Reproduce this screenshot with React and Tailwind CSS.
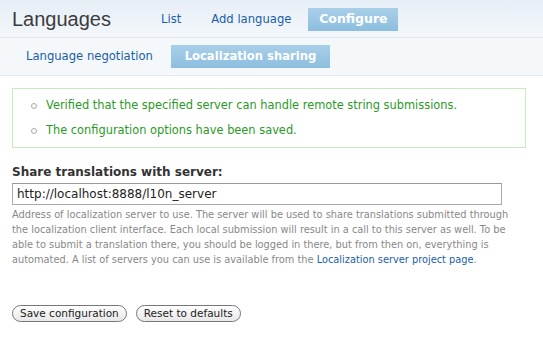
import React from 'react';

export default function App() {
  return (
    <div className="w-[543px] h-[338px] bg-white text-[#333] font-['DejaVu_Sans',sans-serif] overflow-hidden">
      {/* Title + primary tabs */}
      <div className="h-[38px] flex items-start bg-gradient-to-b from-[#e6eef6] to-[#f3f7fb] border-b border-[#e2e8ee]">
        <h1 className="ml-[12px] mt-[7px] text-[20px] leading-[24px] text-[#3c3c3c] font-['Liberation_Sans',sans-serif]">Languages</h1>
        <ul className="flex items-center ml-[50px] mt-[8px] text-[11.6px]">
          <li className="text-[#1a5ea8] leading-[23px]">List</li>
          <li className="ml-[30px] text-[#1a5ea8] leading-[23px]">Add language</li>
          <li className="ml-[17px] h-[23px] w-[90px] flex items-center justify-center text-[12.5px] font-bold text-white bg-gradient-to-b from-[#a9cfe8] to-[#8cbedf]">Configure</li>
        </ul>
      </div>

      {/* Secondary tabs */}
      <div className="h-[38px] flex items-center bg-[#f5f8fb] border-b border-[#e2e8ee] text-[11.6px]">
        <span className="ml-[26px] text-[#1a5ea8]">Language negotiation</span>
        <span className="ml-[18px] h-[23px] w-[159px] flex items-center justify-center font-bold text-white bg-gradient-to-b from-[#a9cfe8] to-[#8cbedf]">Localization sharing</span>
      </div>

      {/* Messages */}
      <div className="mx-[12px] mt-[12px] w-[514px] h-[60px] border border-[#c4ecbc] bg-white flex flex-col justify-center">
        <ul className="text-[11.4px] text-[#2a9a28] leading-[25px]">
          <li className="flex items-center">
            <span className="ml-[18px] mr-[9px] w-[6px] h-[6px] rounded-full border border-[#aaa]"></span>
            Verified that the specified server can handle remote string submissions.
          </li>
          <li className="flex items-center">
            <span className="ml-[18px] mr-[9px] w-[6px] h-[6px] rounded-full border border-[#aaa]"></span>
            The configuration options have been saved.
          </li>
        </ul>
      </div>

      {/* Form item */}
      <div className="mx-[12px] mt-[16px]">
        <label className="block text-[12px] font-bold text-[#333] leading-[16px]">Share translations with server:</label>
        <div className="mt-[3px] w-[490px] h-[22px] border border-[#aaa] border-t-[#999] flex items-center px-[4px] text-[12px] text-[#222] bg-white">
          http://localhost:8888/l10n_server
        </div>
        <p className="mt-[2px] text-[9.8px] leading-[15px] text-[#888] w-[506px]">
          Address of localization server to use. The server will be used to share translations submitted through the localization client interface. Each local submission will result in a call to this server as well. To be able to submit a translation there, you should be logged in there, but from then on, everything is automated. A list of servers you can use is available from the <span className="text-[#1a5ea8]">Localization server project page</span>.
        </p>
      </div>

      {/* Buttons */}
      <div className="mx-[12px] mt-[38px] flex gap-[9px]">
        <button className="h-[17px] px-[7px] rounded-full border border-[#777] bg-gradient-to-b from-white to-[#e8e8e8] text-[10.5px] leading-[15px] text-[#222]">Save configuration</button>
        <button className="h-[17px] px-[7px] rounded-full border border-[#777] bg-gradient-to-b from-white to-[#e8e8e8] text-[10.5px] leading-[15px] text-[#222]">Reset to defaults</button>
      </div>
    </div>
  );
}
